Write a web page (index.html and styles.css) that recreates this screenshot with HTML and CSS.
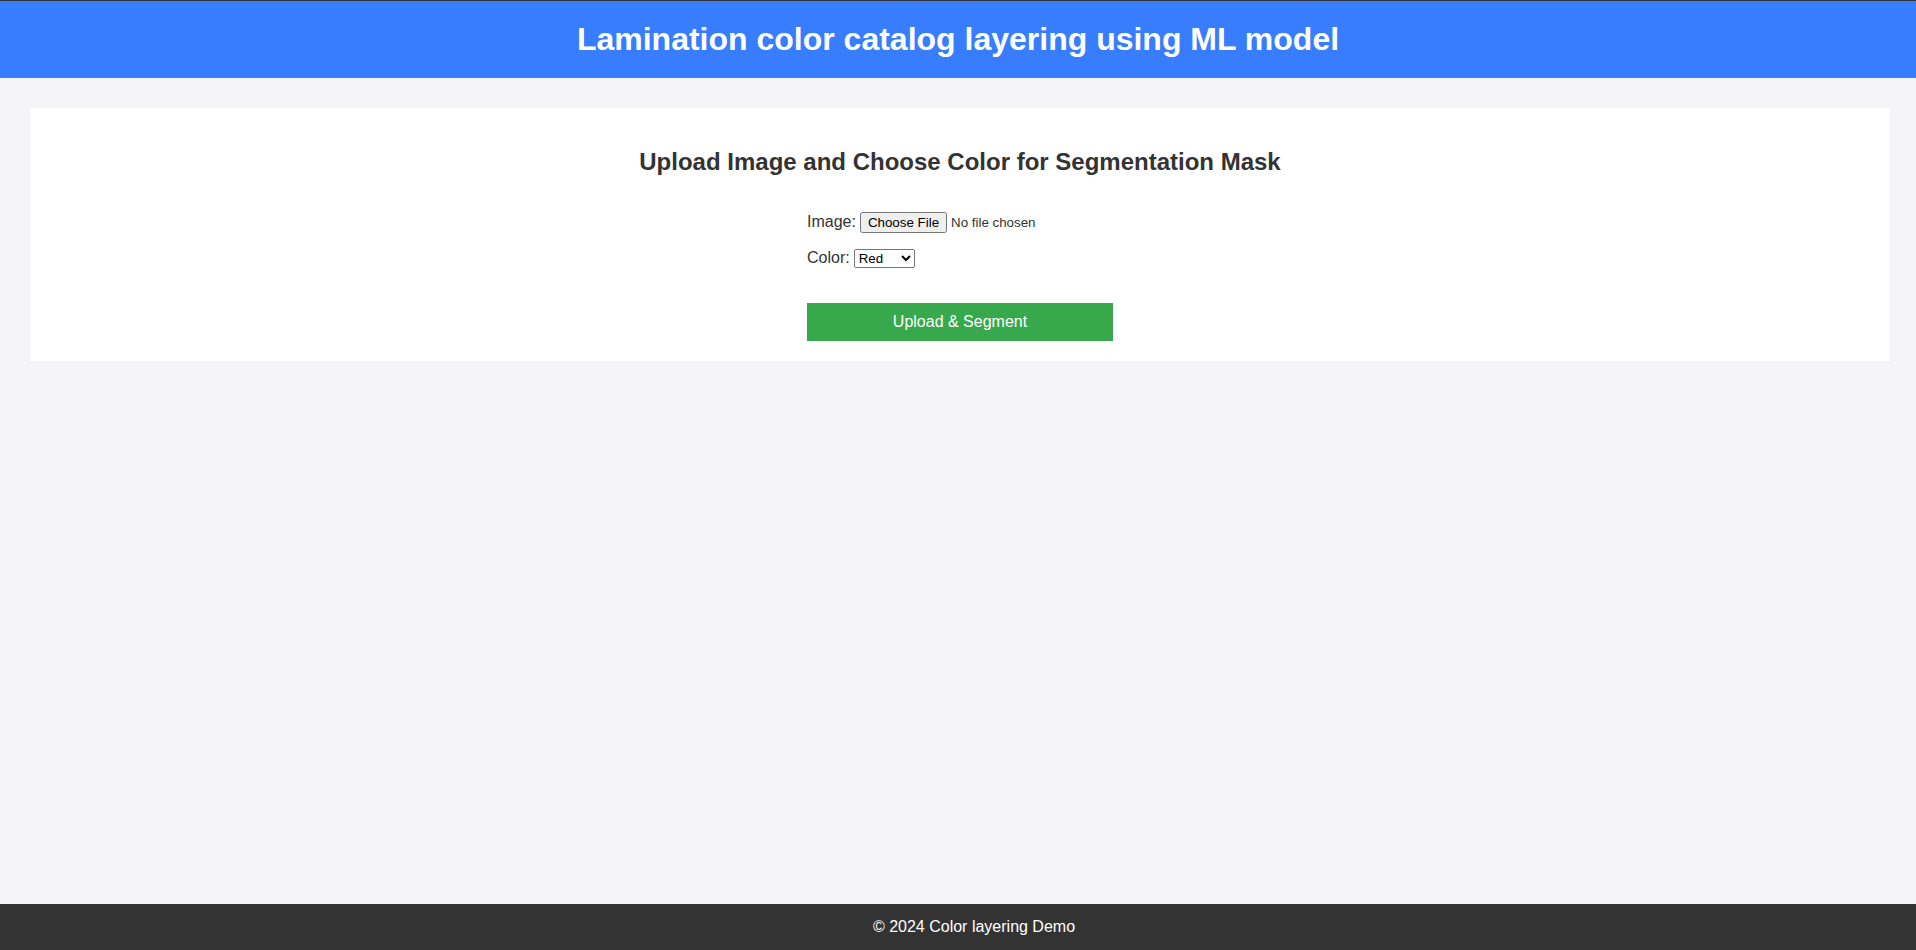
FILE: index.html
```html
<!DOCTYPE html>
<html lang="en">
<head>
<meta charset="utf-8">
<title>Lamination color catalog layering using ML model</title>
<link rel="stylesheet" href="styles.css">
</head>
<body>
<header class="site-header">
  <h1 class="site-title">Lamination color catalog layering using ML model</h1>
</header>
<main class="main">
  <section class="card">
    <h2 class="card-title">Upload Image and Choose Color for Segmentation Mask</h2>
    <form class="upload-form">
      <div class="form-row"><label for="img">Image:</label> <input id="img" type="file" class="file-input"></div>
      <div class="form-row"><label for="color">Color:</label> <select id="color" class="color-select"><option>Red</option><option>Green</option><option>Blue</option><option>Yellow</option></select></div>
      <button type="button" class="submit-btn">Upload &amp; Segment</button>
    </form>
  </section>
</main>
<footer class="site-footer">&copy; 2024 Color layering Demo</footer>
</body>
</html>
```
FILE: styles.css
```css
html, body {
  margin: 0;
  padding: 0;
}
body {
  min-height: 100vh;
  display: flex;
  flex-direction: column;
  background: #f4f4f9;
  font-family: "Liberation Sans", Arial, sans-serif;
  color: #333;
}
.site-header {
  border-top: 1px solid #333;
  background: #377dfe;
  color: #fff;
  text-align: center;
  padding: 20px 0;
}
.site-title {
  margin: 0;
  font-size: 32px;
  line-height: 37px;
  font-weight: bold;
}
.main {
  flex: 1;
  padding: 30px 26px 0 30px;
}
.card {
  background: #fff;
  padding: 20px 20px 20px;
}
.card-title {
  margin: 20px 0 20px;
  font-size: 24px;
  line-height: 28px;
  text-align: center;
  color: #333;
}
.upload-form {
  width: 306px;
  margin: 0 auto;
  padding-top: 15px;
}
.form-row {
  height: 22px;
  display: flex;
  align-items: center;
  gap: 4px;
  font-size: 16px;
  margin-bottom: 14px;
  color: #333;
}
.form-row:nth-child(2) {
  margin-bottom: 34px;
}
.file-input {
  font-size: 13.33px;
  font-family: "Liberation Sans", Arial, sans-serif;
}
.color-select {
  font-size: 13.33px;
  font-family: "Liberation Sans", Arial, sans-serif;
}
.submit-btn {
  display: block;
  width: 100%;
  height: 38px;
  border: none;
  background: #37a94c;
  color: #fff;
  font-size: 16px;
  font-family: "Liberation Sans", Arial, sans-serif;
  cursor: pointer;
}
.site-footer {
  background: #333;
  color: #fff;
  text-align: center;
  font-size: 16px;
  line-height: 18px;
  padding: 14px 0 14px 32px;
}
```
